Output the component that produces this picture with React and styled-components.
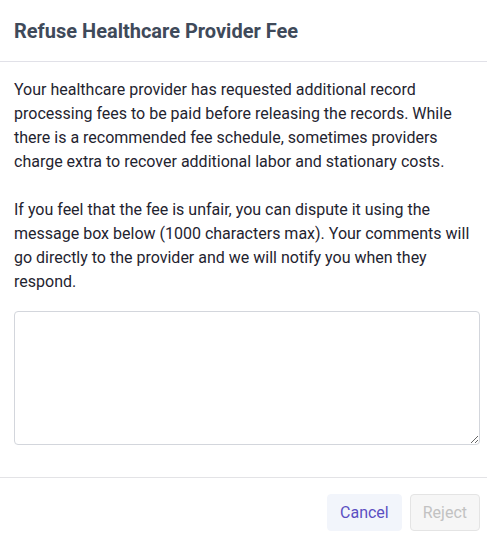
import styled, {createGlobalStyle} from 'styled-components'

const GlobalStyle = createGlobalStyle`
    html, body {
        margin: 0;
        padding: 0;
        background: #ffffff;
        font-family: Roboto, "Liberation Sans", sans-serif;
    }
`

const App = () => {
    return(
        <>
            <GlobalStyle />
            <Modal>
                <Header>
                    <Title>Refuse Healthcare Provider Fee</Title>
                </Header>
                <Body>
                    <Text>
                        Your healthcare provider has requested additional record processing fees to be paid before releasing the records. While there is a recommended fee schedule, sometimes providers charge extra to recover additional labor and stationary costs.
                    </Text>
                    <Text>
                        If you feel that the fee is unfair, you can dispute it using the message box below (1000 characters max). Your comments will go directly to the provider and we will notify you when they respond.
                    </Text>
                    <Message maxLength={1000} />
                </Body>
                <Footer>
                    <Button variant="cancel">Cancel</Button>
                    <Button variant="disabled" disabled>Reject</Button>
                </Footer>
            </Modal>
        </>
    );
}

const Modal = styled.div`
    width: 487px;
    height: 547px;
    background: #ffffff;
    display: flex;
    flex-direction: column;
`

const Header = styled.div`
    height: 62px;
    padding: 0 14px;
    display: flex;
    align-items: center;
    border-bottom: 1px solid #e1e1e8;
    box-sizing: border-box;
`

const Title = styled.h2`
    margin: 0;
    font-size: 20px;
    font-weight: 700;
    color: #3f4a5a;
`

const Body = styled.div`
    padding: 16px 7px 32px 14px;
    display: flex;
    flex-direction: column;
`

const Text = styled.p`
    margin: 0 0 24px;
    font-size: 16px;
    line-height: 24px;
    color: #1f2430;

    &:last-of-type{
        margin-bottom: 17px;
    }
`

const Message = styled.textarea`
    height: 134px;
    box-sizing: border-box;
    border: 1px solid #d3d6dc;
    border-radius: 4px;
    padding: 8px;
    font-family: inherit;
    font-size: 16px;
    resize: vertical;
    outline: none;
`

const Footer = styled.div`
    border-top: 1px solid #e3e3e6;
    padding: 16px 7px 16px 14px;
    display: flex;
    justify-content: flex-end;
    gap: 8px;
`

const Button = styled.button`
    height: 37px;
    padding: 0 12px;
    border-radius: 4px;
    font-family: inherit;
    font-size: 16px;
    cursor: pointer;
    background: ${p => p.variant === 'cancel' ? '#f2f5fb' : '#f6f6f6'};
    color: ${p => p.variant === 'cancel' ? '#5b4fc2' : '#c2c2c2'};
    border: 1px solid ${p => p.variant === 'cancel' ? '#f2f5fb' : '#e4e4e4'};
`

export default App;
